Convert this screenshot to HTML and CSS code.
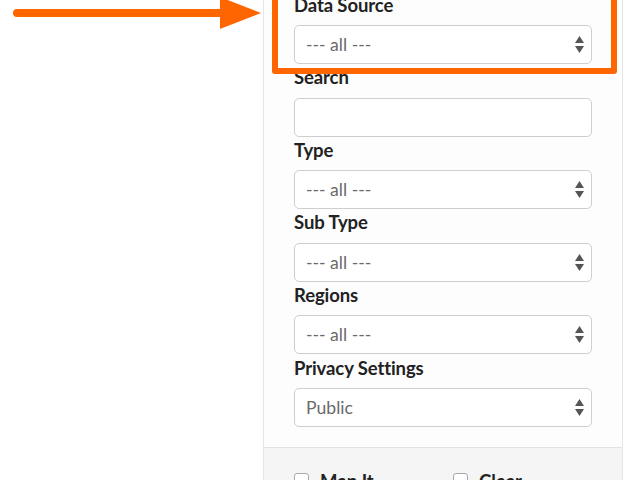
FILE: index.html
```html
<!DOCTYPE html>
<html lang="en">
<head>
<meta charset="utf-8">
<title>Filters</title>
<link rel="stylesheet" href="styles.css">
</head>
<body>
<div class="page">
  <div class="canvas">
    <svg class="arrow" width="262" height="34" viewBox="0 0 262 34" aria-hidden="true">
      <line x1="17" y1="16" x2="224" y2="16" stroke="#ff6600" stroke-width="8" stroke-linecap="round"/>
      <polygon points="220,0 261,16 220,32" fill="#ff6600"/>
    </svg>
  </div>
  <aside class="panel">
    <div class="fields">
      <label class="lbl">Data Source</label>
      <div class="select"><span>--- all ---</span><svg width="9" height="17" viewBox="0 0 9 17"><polygon points="4.5,0 9,7 0,7" fill="#555"/><polygon points="0,10 9,10 4.5,17" fill="#555"/></svg></div>
      <label class="lbl">Search</label>
      <div class="input"></div>
      <label class="lbl">Type</label>
      <div class="select"><span>--- all ---</span><svg width="9" height="17" viewBox="0 0 9 17"><polygon points="4.5,0 9,7 0,7" fill="#555"/><polygon points="0,10 9,10 4.5,17" fill="#555"/></svg></div>
      <label class="lbl">Sub Type</label>
      <div class="select"><span>--- all ---</span><svg width="9" height="17" viewBox="0 0 9 17"><polygon points="4.5,0 9,7 0,7" fill="#555"/><polygon points="0,10 9,10 4.5,17" fill="#555"/></svg></div>
      <label class="lbl">Regions</label>
      <div class="select"><span>--- all ---</span><svg width="9" height="17" viewBox="0 0 9 17"><polygon points="4.5,0 9,7 0,7" fill="#555"/><polygon points="0,10 9,10 4.5,17" fill="#555"/></svg></div>
      <label class="lbl">Privacy Settings</label>
      <div class="select"><span>Public</span><svg width="9" height="17" viewBox="0 0 9 17"><polygon points="4.5,0 9,7 0,7" fill="#555"/><polygon points="0,10 9,10 4.5,17" fill="#555"/></svg></div>
    </div>
    <div class="actions">
      <div class="check"><span class="box"></span><span class="ctext">Map It</span></div>
      <div class="check"><span class="box"></span><span class="ctext">Clear</span></div>
    </div>
    <div class="highlight"></div>
  </aside>
</div>
</body>
</html>
```

FILE: styles.css
```css
* { box-sizing: border-box; }
html, body {
  margin: 0;
  padding: 0;
  background: #ffffff;
  font-family: Lato, "Open Sans", "Liberation Sans", sans-serif;
  overflow: hidden;
}
.page {
  display: flex;
  width: 640px;
  height: 480px;
  position: relative;
}
.canvas {
  width: 263px;
  flex: none;
  position: relative;
}
.arrow {
  position: absolute;
  left: 0;
  top: -3px;
}
.panel {
  width: 360px;
  flex: none;
  margin-top: -8.6px;
  border-left: 1px solid #e6e6e6;
  border-right: 1px solid #e6e6e6;
  background: #fdfdfd;
  display: flex;
  flex-direction: column;
  position: relative;
}
.fields {
  padding: 0 30px 20px 30px;
  display: flex;
  flex-direction: column;
}
.lbl {
  display: block;
  font-weight: 700;
  font-size: 18.5px;
  line-height: 22px;
  letter-spacing: -0.1px;
  color: #222;
  margin-top: 2.3px;
  margin-bottom: 9.3px;
}
.select, .input {
  height: 39px;
  flex: none;
  border: 1px solid #cfcfcf;
  border-radius: 5px;
  background: #ffffff;
}
.select {
  display: flex;
  align-items: center;
  justify-content: space-between;
  padding: 0 7px 0 11px;
  font-size: 17.6px;
  color: #6a6a6a;
}
.actions {
  flex: 1;
  border-top: 1px solid #e3e3e3;
  background: #f5f5f5;
  padding: 25px 30px 0 30px;
  display: grid;
  grid-template-columns: 159px 1fr;
  align-content: start;
}
.check {
  display: flex;
  align-items: flex-start;
  gap: 11px;
}
.box {
  width: 15px;
  height: 15px;
  border: 1px solid #a8a8a8;
  border-radius: 3px;
  background: #fff;
  flex: none;
}
.ctext {
  font-weight: 700;
  font-size: 18.5px;
  line-height: 20px;
  color: #222;
  margin-top: -2px;
}
.highlight {
  position: absolute;
  left: 8px;
  top: -3.4px;
  width: 345px;
  height: 86px;
  border: 6px solid #ff6600;
  border-radius: 3px;
  pointer-events: none;
}
```
